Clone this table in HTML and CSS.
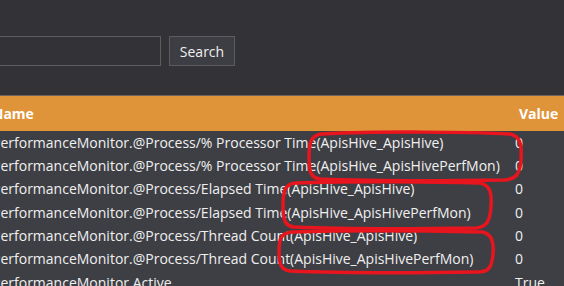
FILE: index.html
```html
<!DOCTYPE html>
<html lang="en">
<head>
  <meta charset="UTF-8">
  <title>Performance Counters</title>
  <link rel="stylesheet" href="styles.css">
</head>
<body>
  <div class="page">
    <div class="search-bar">
      <input type="text" class="search-input">
      <button class="search-btn">Search</button>
    </div>
    <table class="counters">
      <thead>
        <tr><th class="col-name">Name</th><th class="col-value">Value</th></tr>
      </thead>
      <tbody>
        <tr><td>PerformanceMonitor.@Process/% Processor Time(ApisHive_ApisHive)</td><td>0</td></tr>
        <tr><td>PerformanceMonitor.@Process/% Processor Time(ApisHive_ApisHivePerfMon)</td><td>0</td></tr>
        <tr><td>PerformanceMonitor.@Process/Elapsed Time(ApisHive_ApisHive)</td><td>0</td></tr>
        <tr><td>PerformanceMonitor.@Process/Elapsed Time(ApisHive_ApisHivePerfMon)</td><td>0</td></tr>
        <tr><td>PerformanceMonitor.@Process/Thread Count(ApisHive_ApisHive)</td><td>0</td></tr>
        <tr><td>PerformanceMonitor.@Process/Thread Count(ApisHive_ApisHivePerfMon)</td><td>0</td></tr>
        <tr><td>PerformanceMonitor.Active</td><td>True</td></tr>
      </tbody>
    </table>
  </div>

  <!-- red marker rings drawn over the table -->
  <svg class="marks" width="564" height="286" viewBox="0 0 564 286">
    <path d="M322 134 C380 131 470 132 510 134 C520 136 522 144 521 160 C520 174 516 179 505 180 C440 181 370 181 320 179 C311 178 309 172 309 158 C309 142 311 135 322 134 Z"/>
    <path d="M296 183 C350 181 440 182 480 183 C490 185 492 193 491 207 C490 222 486 227 476 228 C410 229 340 229 294 227 C285 226 283 220 283 206 C283 190 285 184 296 183 Z"/>
    <path d="M292 232 C350 230 440 231 482 232 C492 234 494 242 493 254 C492 268 488 272 478 272 C410 273 340 273 290 271 C281 270 279 264 279 252 C279 238 281 233 292 232 Z"/>
  </svg>
</body>
</html>
```

FILE: styles.css
```css
body {
  margin: 0;
  background: #333337;
  font-family: "Open Sans", "Noto Sans", sans-serif;
  color: #f0f0f0;
  overflow: hidden;
  width: 564px;
  height: 286px;
  position: relative;
}
.page {
  margin-left: -16px;
}
.search-bar {
  display: flex;
  align-items: flex-start;
  gap: 8px;
  padding: 36px 0 0 0;
  height: 95px;
  box-sizing: border-box;
}
.search-input {
  width: 177px;
  height: 30px;
  box-sizing: border-box;
  background: #333337;
  border: 1px solid #5d5d5f;
  color: #f0f0f0;
}
.search-btn {
  width: 66px;
  height: 30px;
  box-sizing: border-box;
  background: #3d3e43;
  border: 1px solid #5d5d5f;
  color: #f0f0f0;
  font-family: inherit;
  font-size: 14px;
  padding: 0;
}
.counters {
  border-collapse: collapse;
  border-top: 1px solid #6b655d;
  table-layout: fixed;
  width: 600px;
  background: #3e3f44;
  font-size: 14px;
}
.counters th {
  background: #e0943a;
  color: #fff;
  font-weight: bold;
  font-size: 14px;
  text-align: left;
  height: 35px;
  padding: 0 8px;
  box-sizing: border-box;
}
.counters td {
  height: 23.33px;
  padding: 0 8px;
  white-space: nowrap;
  overflow: hidden;
}
.col-name {
  width: 523px;
}
.counters th.col-value {
  padding-left: 12px;
}
.marks {
  position: absolute;
  left: 0;
  top: 0;
}
.marks path {
  fill: none;
  stroke: #e8141e;
  stroke-width: 3.5;
}
```
